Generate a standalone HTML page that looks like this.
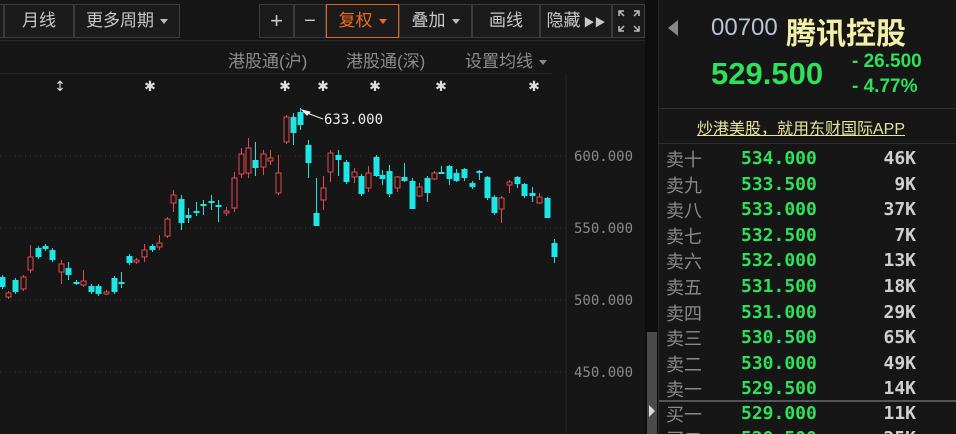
<!DOCTYPE html>
<html style="width:956px;height:434px;overflow:hidden"><head><meta charset="utf-8"><style>
*{margin:0;padding:0;box-sizing:border-box}
html,body{width:956px;height:434px;overflow:hidden}
body{background:#161616;font-family:"Liberation Sans","Noto Sans CJK SC",sans-serif;position:relative;color:#aaa}
.a{position:absolute;white-space:nowrap}
.btn{position:absolute;top:4px;height:34px;border:1px solid #3c3c3c;background:#1b1b1b;color:#c8c8c8;font-size:17px;line-height:32px;text-align:center}
.tri{display:inline-block;width:0;height:0;border-left:4px solid transparent;border-right:4px solid transparent;border-top:5px solid #bbb;vertical-align:middle;margin-left:6px}
.row{position:absolute;left:666px;width:260px;height:25px;font-size:18px}
.row .l{position:absolute;left:0;color:#8a8a8a;font-family:"Noto Sans CJK SC",sans-serif;font-size:18px;top:-2px}
.row .p{position:absolute;left:75px;color:#2fe05a;font-family:"DejaVu Sans Mono","Liberation Mono",monospace;font-size:18px;font-weight:bold}
.row .v{position:absolute;right:10px;color:#cfcfcf;font-family:"DejaVu Sans Mono","Liberation Mono",monospace;font-size:18px;font-weight:bold}
</style></head><body>
<div class="a" style="left:0;top:40px;width:645px;height:1px;background:#2a2a2a"></div>
<div class="btn" style="left:-2px;width:6px"></div>
<div class="btn" style="left:4px;width:70px">月线</div>
<div class="btn" style="left:74px;width:106px">更多周期<span class="tri"></span></div>
<div class="btn" style="left:259px;width:35px;font-size:22px">+</div>
<div class="btn" style="left:294px;width:32px;font-size:20px">−</div>
<div class="btn" style="left:326px;width:73px;border:1.5px solid #e0651a;color:#f06a1a">复权<span class="tri" style="border-top-color:#f06a1a"></span></div>
<div class="btn" style="left:399px;width:73px">叠加<span class="tri"></span></div>
<div class="btn" style="left:472px;width:68px">画线</div>
<div class="btn" style="left:540px;width:72px">隐藏<span style="font-size:11px;margin-left:3px">▶▶</span></div>
<div class="btn" style="left:612px;width:33px;font-size:14px;line-height:30px">
<svg width="26" height="26" viewBox="0 0 26 26" style="margin-top:3px" stroke="#bbb" fill="none" stroke-width="1.5"><path d="M3 8V3h5M3 3l5 5M23 8V3h-5M23 3l-5 5M3 18v5h5M3 23l5-5M23 18v5h-5M23 23l-5-5"/></svg></div>
<div class="a" style="left:228px;top:47px;font-size:17px;color:#8c8c8c">港股通(沪)</div>
<div class="a" style="left:346px;top:47px;font-size:17px;color:#8c8c8c">港股通(深)</div>
<div class="a" style="left:465px;top:47px;font-size:17px;color:#8c8c8c">设置均线<span class="tri" style="border-top-color:#888"></span></div>
<div class="a" style="left:0;top:73px;width:552px;height:1px;background:#242424"></div>
<svg class="a" style="left:0;top:0" width="645" height="434">
<g stroke="#3a3a3a" stroke-dasharray="1,4" stroke-width="1">
<line x1="0" y1="156" x2="566" y2="156"/><line x1="0" y1="228" x2="566" y2="228"/><line x1="0" y1="300" x2="566" y2="300"/><line x1="0" y1="372" x2="566" y2="372"/></g>
<line x1="566" y1="74" x2="566" y2="434" stroke="#262626"/>
<g font-family="DejaVu Sans Mono,Liberation Mono,monospace" font-size="14" fill="#8a8a8a">
<text x="574" y="161">600.000</text><text x="574" y="233">550.000</text><text x="574" y="305">500.000</text><text x="574" y="377">450.000</text></g>
<g font-size="14" fill="#ddd" text-anchor="middle" font-family="DejaVu Sans,sans-serif">
<text x="60" y="91">↕</text><text x="150" y="91">✱</text><text x="285" y="91">✱</text><text x="323" y="91">✱</text><text x="375" y="91">✱</text><text x="441" y="91">✱</text><text x="534" y="91">✱</text></g>
<path d="M302 110l8 2-3 3zM307 113l16 6" stroke="#eee" fill="#eee" stroke-width="1"/>
<text x="324" y="124" font-family="DejaVu Sans Mono,Liberation Mono,monospace" font-size="14" fill="#eee">633.000</text>
<g id="c"></g>
</svg>
<script>
var C=[[2,277,287,'c'],[8,293,297,'r'],[15,280,292,'c'],[23,277,289,'r'],[30,257,270,'r',245,273],[38,248,257,'c'],[45,246,249,'c'],[52,250,260,'c'],[61,264,272,'r',260,284],[68,268,275,'c',262,280],[76,282,283,'c'],[83,281,285,'r',270,287],[91,286,292,'c'],[98,286,294,'c'],[106,292,293,'r'],[114,278,292,'c'],[121,282,283,'c',272,288],[129,256,263,'c'],[136,260,262,'r'],[144,250,257,'r',244,262],[152,246,250,'c'],[159,243,247,'r',235,250],[167,219,236,'r'],[173,195,203,'r',190,212],[181,199,223,'c',195,230],[188,215,218,'c',208,223],[196,211,212,'c',202,216],[203,204,206,'c',200,215],[211,201,203,'c',195,210],[218,205,207,'c',200,222],[226,211,213,'r',207,216],[234,178,208,'r',172,212],[241,154,174,'r',148,178],[248,148,173,'r',138,178],[255,160,168,'c',142,176],[263,154,167,'r',150,175],[270,158,161,'r',150,165],[278,173,193,'r',155,195],[286,117,142,'r'],[293,117,133,'c',113,145],[300,112,125,'c',108,130],[308,145,163,'c',140,178],[316,213,226,'c',178,226],[323,188,200,'r',176,210],[330,153,172,'r',150,182],[338,155,160,'c',150,176],[346,162,182,'c'],[354,172,177,'r',168,183],[361,176,194,'c'],[368,173,188,'r',166,192],[376,157,176,'c',155,177],[382,175,179,'c',170,185],[389,171,194,'c',165,197],[397,177,188,'r',176,192],[404,177,181,'c',163,182],[412,181,209,'c',178,209],[419,187,196,'r',183,197],[427,178,193,'c',176,202],[434,173,179,'r',171,180],[441,172,174,'c',166,174],[449,166,179,'c',165,185],[456,173,181,'c',169,182],[464,169,178,'c',168,181],[472,183,187,'c',181,189],[479,171,173,'c',170,180],[487,177,198,'c',176,200],[494,197,213,'c'],[501,198,209,'r',196,223],[509,182,185,'r',180,193],[517,177,184,'c',176,188],[524,184,196,'c',183,198],[532,193,196,'c',187,202],[539,197,203,'r',193,204],[547,198,218,'c',197,218],[554,243,257,'c',239,263]];
var s='';C.forEach(function(k){var col=k[3]=='c'?'#1ee6e6':'#e5484d';var wt=k[4]||k[1]-2,wb=k[5]||k[2]+2;
s+='<line x1="'+k[0]+'.5" y1="'+wt+'" x2="'+k[0]+'.5" y2="'+wb+'" stroke="'+col+'"/>';
if(k[3]=='c')s+='<rect x="'+(k[0]-2.5)+'" y="'+k[1]+'" width="6" height="'+Math.max(2,k[2]-k[1])+'" fill="'+col+'"/>';
else s+='<rect x="'+(k[0]-2)+'" y="'+k[1]+'" width="5" height="'+Math.max(2,k[2]-k[1])+'" fill="#161616" stroke="'+col+'"/>';});
document.getElementById('c').innerHTML=s;
</script>
<div class="a" style="left:645px;top:0;width:13px;height:434px;background:#0e0e0e"></div>
<div class="a" style="left:647px;top:332px;width:10px;height:102px;background:#4a4a4a"></div>
<div class="a" style="left:649px;top:405px;width:0;height:0;border-top:6px solid transparent;border-bottom:6px solid transparent;border-left:6px solid #ddd"></div>
<div class="a" style="left:658px;top:0;width:1px;height:434px;background:#2c2c2c"></div>
<div class="a" style="left:668px;top:20px;width:0;height:0;border-top:8px solid transparent;border-bottom:8px solid transparent;border-right:10px solid #888"></div>
<div class="a" style="left:711px;top:14px;font-size:24px;color:#b8c4d8">00700</div>
<div class="a" style="left:786px;top:9px;font-size:30px;font-weight:bold;color:#f4f0a8;font-family:'Noto Sans CJK SC',sans-serif">腾讯控股</div>
<div class="a" style="left:711px;top:56px;font-size:31px;font-weight:bold;color:#2fe05a">529.500</div>
<div class="a" style="left:852px;top:51px;font-size:19px;color:#2fe05a;font-weight:bold">- 26.500</div>
<div class="a" style="left:852px;top:76px;font-size:19px;color:#2fe05a;font-weight:bold">- 4.77%</div>
<div class="a" style="left:659px;top:108px;width:297px;height:1px;background:#2e2e2e"></div>
<div class="a" style="left:697px;top:115px;font-size:16px;color:#e8e49c;text-decoration:underline">炒港美股，就用东财国际APP</div>
<div class="a" style="left:659px;top:143px;width:297px;height:1px;background:#2e2e2e"></div>
<div class="row" style="top:148px"><span class="l">卖十</span><span class="p">534.000</span><span class="v">46K</span></div>
<div class="row" style="top:173.6px"><span class="l">卖九</span><span class="p">533.500</span><span class="v">9K</span></div>
<div class="row" style="top:199.2px"><span class="l">卖八</span><span class="p">533.000</span><span class="v">37K</span></div>
<div class="row" style="top:224.8px"><span class="l">卖七</span><span class="p">532.500</span><span class="v">7K</span></div>
<div class="row" style="top:250.4px"><span class="l">卖六</span><span class="p">532.000</span><span class="v">13K</span></div>
<div class="row" style="top:276px"><span class="l">卖五</span><span class="p">531.500</span><span class="v">18K</span></div>
<div class="row" style="top:301.6px"><span class="l">卖四</span><span class="p">531.000</span><span class="v">29K</span></div>
<div class="row" style="top:327.2px"><span class="l">卖三</span><span class="p">530.500</span><span class="v">65K</span></div>
<div class="row" style="top:352.8px"><span class="l">卖二</span><span class="p">530.000</span><span class="v">49K</span></div>
<div class="row" style="top:378.4px"><span class="l">卖一</span><span class="p">529.500</span><span class="v">14K</span></div>
<div class="a" style="left:659px;top:400px;width:297px;height:2px;background:#555"></div>
<div class="row" style="top:403px"><span class="l">买一</span><span class="p">529.000</span><span class="v">11K</span></div>
<div class="row" style="top:428px"><span class="l">买二</span><span class="p">528.500</span><span class="v">25K</span></div>
</body></html>
